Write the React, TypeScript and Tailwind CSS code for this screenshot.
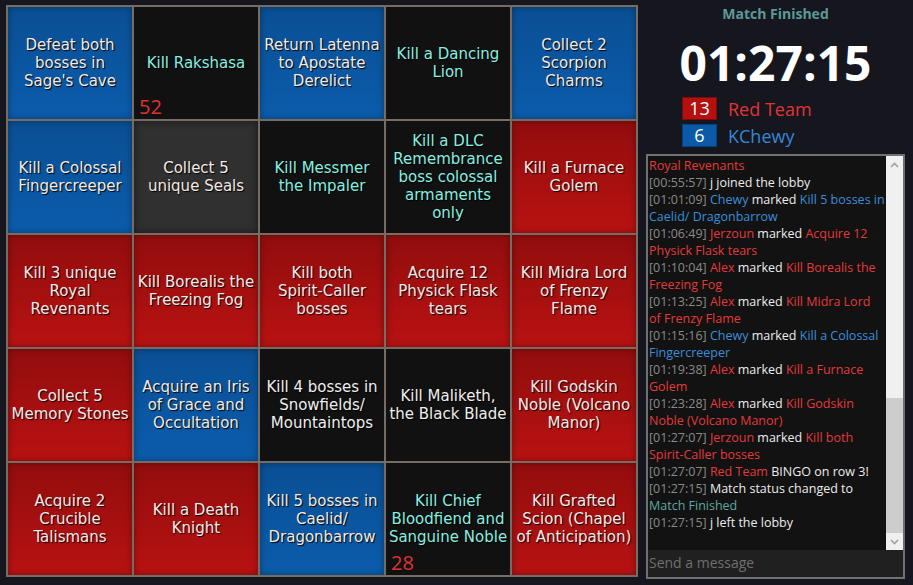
import React from "react";

type Kind = "blue" | "red" | "dark" | "grey";
type Cell = { k: Kind; lines: string[]; cyan?: boolean; num?: string };

const cells: Cell[] = [
  { k: "blue", lines: ["Defeat both", "bosses in", "Sage's Cave"] },
  { k: "dark", cyan: true, lines: ["Kill Rakshasa"], num: "52" },
  { k: "blue", lines: ["Return Latenna", "to Apostate", "Derelict"] },
  { k: "dark", cyan: true, lines: ["Kill a Dancing", "Lion"] },
  { k: "blue", lines: ["Collect 2", "Scorpion", "Charms"] },

  { k: "blue", lines: ["Kill a Colossal", "Fingercreeper"] },
  { k: "grey", lines: ["Collect 5", "unique Seals"] },
  { k: "dark", cyan: true, lines: ["Kill Messmer", "the Impaler"] },
  { k: "dark", cyan: true, lines: ["Kill a DLC", "Remembrance", "boss colossal", "armaments", "only"] },
  { k: "red", lines: ["Kill a Furnace", "Golem"] },

  { k: "red", lines: ["Kill 3 unique", "Royal", "Revenants"] },
  { k: "red", lines: ["Kill Borealis the", "Freezing Fog"] },
  { k: "red", lines: ["Kill both", "Spirit-Caller", "bosses"] },
  { k: "red", lines: ["Acquire 12", "Physick Flask", "tears"] },
  { k: "red", lines: ["Kill Midra Lord", "of Frenzy", "Flame"] },

  { k: "red", lines: ["Collect 5", "Memory Stones"] },
  { k: "blue", lines: ["Acquire an Iris", "of Grace and", "Occultation"] },
  { k: "dark", lines: ["Kill 4 bosses in", "Snowfields/", "Mountaintops"] },
  { k: "dark", lines: ["Kill Maliketh,", "the Black Blade"] },
  { k: "red", lines: ["Kill Godskin", "Noble (Volcano", "Manor)"] },

  { k: "red", lines: ["Acquire 2", "Crucible", "Talismans"] },
  { k: "red", lines: ["Kill a Death", "Knight"] },
  { k: "blue", lines: ["Kill 5 bosses in", "Caelid/", "Dragonbarrow"] },
  { k: "dark", cyan: true, lines: ["Kill Chief", "Bloodfiend and", "Sanguine Noble"], num: "28" },
  { k: "red", lines: ["Kill Grafted", "Scion (Chapel", "of Anticipation)"] },
];

const bgClass: Record<Kind, string> = {
  blue: "bg-[linear-gradient(to_bottom,#0a4f94,#0b5cac)] shadow-[inset_0_0_7px_rgba(0,0,0,0.35)]",
  red: "bg-[linear-gradient(to_bottom,#920d0d,#b91212)] shadow-[inset_0_0_7px_rgba(0,0,0,0.35)]",
  dark: "bg-[#111111]",
  grey: "bg-[#303030] shadow-[inset_0_0_8px_rgba(0,0,0,0.5)]",
};

function BoardCell({ c }: { c: Cell }) {
  const color = c.cyan ? "text-[#86efe0]" : c.k === "dark" ? "text-[#eeeeee]" : "text-[#f3e9e6]";
  return (
    <div className={`relative flex items-center justify-center ${bgClass[c.k]}`}>
      <div
        className={`text-center text-[15px] leading-[18px] whitespace-nowrap font-['DejaVu_Sans',sans-serif] [text-shadow:1px_1px_1px_#000] ${color}`}
      >
        {c.lines.map((l, i) => (
          <div key={i}>{l}</div>
        ))}
      </div>
      {c.num && (
        <div className="absolute left-[5px] bottom-[2px] text-[20px] leading-[20px] text-[#e03232] font-['Open_Sans',sans-serif]">
          {c.num}
        </div>
      )}
    </div>
  );
}

type Seg = [string, string];
const T = "text-[#8a8a8a]";
const W = "text-[#ececec]";
const R = "text-[#e23a3a]";
const B = "text-[#3b8edb]";
const G = "text-[#5fa8a0]";

const chat: Seg[][] = [
  [[R, "Royal Revenants"]],
  [[T, "[00:55:57] "], [W, "j joined the lobby"]],
  [[T, "[01:01:09] "], [B, "Chewy "], [W, "marked "], [B, "Kill 5 bosses in"]],
  [[B, "Caelid/ Dragonbarrow"]],
  [[T, "[01:06:49] "], [R, "Jerzoun "], [W, "marked "], [R, "Acquire 12"]],
  [[R, "Physick Flask tears"]],
  [[T, "[01:10:04] "], [R, "Alex "], [W, "marked "], [R, "Kill Borealis the"]],
  [[R, "Freezing Fog"]],
  [[T, "[01:13:25] "], [R, "Alex "], [W, "marked "], [R, "Kill Midra Lord"]],
  [[R, "of Frenzy Flame"]],
  [[T, "[01:15:16] "], [B, "Chewy "], [W, "marked "], [B, "Kill a Colossal"]],
  [[B, "Fingercreeper"]],
  [[T, "[01:19:38] "], [R, "Alex "], [W, "marked "], [R, "Kill a Furnace"]],
  [[R, "Golem"]],
  [[T, "[01:23:28] "], [R, "Alex "], [W, "marked "], [R, "Kill Godskin"]],
  [[R, "Noble (Volcano Manor)"]],
  [[T, "[01:27:07] "], [R, "Jerzoun "], [W, "marked "], [R, "Kill both"]],
  [[R, "Spirit-Caller bosses"]],
  [[T, "[01:27:07] "], [R, "Red Team "], [W, "BINGO on row 3!"]],
  [[T, "[01:27:15] "], [W, "Match status changed to"]],
  [[G, "Match Finished"]],
  [[T, "[01:27:15] "], [W, "j left the lobby"]],
];

function Chevron({ up }: { up?: boolean }) {
  return (
    <svg width="9" height="6" viewBox="0 0 9 6" className="block">
      <path
        d={up ? "M1 5 L4.5 1.5 L8 5" : "M1 1 L4.5 4.5 L8 1"}
        fill="none"
        stroke="#a0a0a0"
        strokeWidth="1.6"
      />
    </svg>
  );
}

export default function App() {
  return (
    <div className="w-[913px] h-[585px] bg-[#16161f] flex overflow-hidden">
      <div className="pl-[6px] pt-[5px]">
        <div className="grid grid-cols-[repeat(5,124px)] grid-rows-[repeat(5,112px)] gap-[2px] p-[2px] bg-[#756c63]">
          {cells.map((c, i) => (
            <BoardCell key={i} c={c} />
          ))}
        </div>
      </div>

      <div className="ml-[8px] w-[259px] flex flex-col font-['Open_Sans',sans-serif]">
        <div className="mt-[4px] h-[20px] leading-[20px] text-center text-[14px] font-bold text-[#5c9a98]">
          Match Finished
        </div>
        <div className="mt-[11px] h-[56px] leading-[56px] text-center text-[48px] font-bold text-white">
          01:27:15
        </div>
        <div className="mt-[6px] ml-[36px] flex flex-col gap-[4px]">
          <div className="flex h-[23px]">
            <div className="w-[35px] h-[23px] border border-[#7c0b0b] bg-[#b41010] text-white text-[18px] leading-[21px] text-center">
              13
            </div>
            <div className="ml-[11px] h-[23px] pt-[2px] text-[18px] leading-[21px] text-[#e03434]">Red Team</div>
          </div>
          <div className="flex h-[23px]">
            <div className="w-[35px] h-[23px] border border-[#083f7c] bg-[#0b5aaa] text-white text-[18px] leading-[21px] text-center">
              6
            </div>
            <div className="ml-[11px] h-[23px] pt-[2px] text-[18px] leading-[21px] text-[#3487d6]">KChewy</div>
          </div>
        </div>

        <div className="mt-[7px] h-[425px] border-2 border-[#707070] flex flex-col">
          <div className="flex-1 flex min-h-0">
            <div className="flex-1 bg-[#121212] pl-[1px] pt-[1px] text-[12.5px] overflow-hidden">
              {chat.map((line, i) => (
                <div key={i} className="h-[17px] leading-[17px] whitespace-nowrap">
                  {line.map(([cls, txt], j) => (
                    <span key={j} className={cls}>
                      {txt}
                    </span>
                  ))}
                </div>
              ))}
            </div>
            <div className="w-[17px] bg-[#f0f0f0] flex flex-col">
              <div className="h-[17px] flex items-center justify-center">
                <Chevron up />
              </div>
              <div className="flex-1 flex flex-col justify-end">
                <div className="h-[135px] bg-[#cdcdcd]" />
              </div>
              <div className="h-[17px] flex items-center justify-center">
                <Chevron />
              </div>
            </div>
          </div>
          <div className="h-[27px] bg-[#202020] pl-[1px] text-[14px] leading-[26px] text-[#6f6f6f]">
            Send a message
          </div>
        </div>
      </div>
    </div>
  );
}
